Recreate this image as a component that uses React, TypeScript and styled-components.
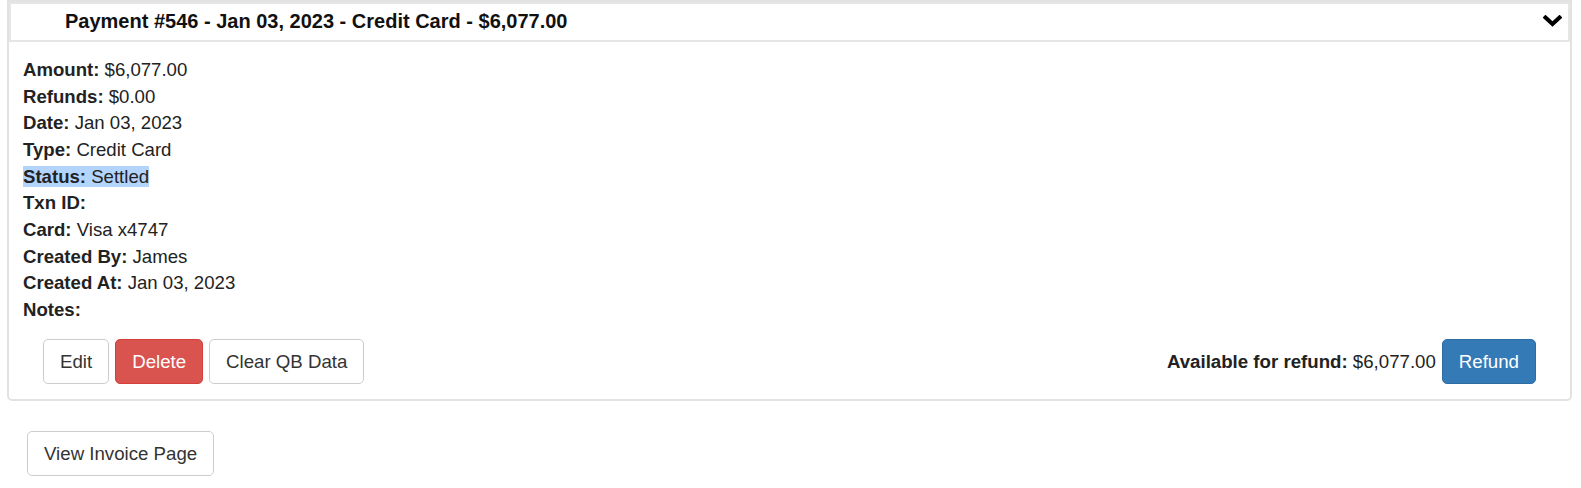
import * as React from 'react';
import styled, { createGlobalStyle } from 'styled-components';

const GlobalStyle = createGlobalStyle`
  body {
    margin: 0;
    background: #fff;
    font-family: "Liberation Sans", Arial, Helvetica, sans-serif;
    color: #333;
  }
`;

const Page = styled.div`
  padding: 0 9px 0 7px;
`;

const Panel = styled.div`
  border: 2px solid #e2e2e2;
  border-radius: 0 0 5px 5px;
  background: #fff;
`;

const Heading = styled.div`
  display: flex;
  align-items: center;
  justify-content: space-between;
  border: 2px solid #e6e6e6;
  padding: 5px 6px 7px 54px;
`;

const Title = styled.div`
  font-size: 20px;
  line-height: 24px;
  font-weight: bold;
  color: #111;
`;

const Body = styled.div`
  padding: 15px 14px 15px 14px;
`;

const Line = styled.div<{ $selected?: boolean }>`
  font-size: 18.6px;
  line-height: 26.67px;
  color: #222;
  span {
    background: ${p => (p.$selected ? '#b3d4fc' : 'transparent')};
  }
`;

const Actions = styled.div`
  display: flex;
  align-items: center;
  justify-content: space-between;
  margin: 15px 20px 0 20px;
`;

const Group = styled.div`
  display: flex;
  align-items: center;
  gap: 6px;
`;

const Button = styled.button<{ $variant?: 'danger' | 'primary' }>`
  font-family: "Liberation Sans", Arial, Helvetica, sans-serif;
  font-size: 18.67px;
  line-height: 27px;
  padding: 8px 16px;
  border-radius: 5px;
  border: 1px solid
    ${p => (p.$variant === 'danger' ? '#d43f3a' : p.$variant === 'primary' ? '#2e6da4' : '#ccc')};
  background: ${p => (p.$variant === 'danger' ? '#d9534f' : p.$variant === 'primary' ? '#337ab7' : '#fff')};
  color: ${p => (p.$variant ? '#fff' : '#333')};
  cursor: pointer;
  white-space: nowrap;
`;

const Available = styled.span`
  font-size: 18.67px;
  line-height: 27px;
  color: #222;
`;

const Footer = styled.div`
  margin: 30px 0 0 20px;
`;

const Chevron = () => (
  <svg width="19" height="12" viewBox="0 0 19 12">
    <polyline points="2.5,2.5 9.5,9 16.5,2.5" fill="none" stroke="#000" strokeWidth="4" strokeLinecap="square" />
  </svg>
);

const rows: [string, string][] = [
  ['Amount:', '$6,077.00'],
  ['Refunds:', '$0.00'],
  ['Date:', 'Jan 03, 2023'],
  ['Type:', 'Credit Card'],
  ['Status:', 'Settled'],
  ['Txn ID:', ''],
  ['Card:', 'Visa x4747'],
  ['Created By:', 'James'],
  ['Created At:', 'Jan 03, 2023'],
  ['Notes:', ''],
];

export default function App() {
  return (
    <Page>
      <GlobalStyle />
      <Panel>
        <Heading>
          <Title>Payment #546 - Jan 03, 2023 - Credit Card - $6,077.00</Title>
          <Chevron />
        </Heading>
        <Body>
          {rows.map(([label, value]) => (
            <Line key={label} $selected={label === 'Status:'}>
              <span>
                <b>{label}</b>
                {value ? ` ${value}` : ''}
              </span>
            </Line>
          ))}
          <Actions>
            <Group>
              <Button>Edit</Button>
              <Button $variant="danger">Delete</Button>
              <Button>Clear QB Data</Button>
            </Group>
            <Group>
              <Available>
                <b>Available for refund:</b> $6,077.00
              </Available>
              <Button $variant="primary">Refund</Button>
            </Group>
          </Actions>
        </Body>
      </Panel>
      <Footer>
        <Button>View Invoice Page</Button>
      </Footer>
    </Page>
  );
}
